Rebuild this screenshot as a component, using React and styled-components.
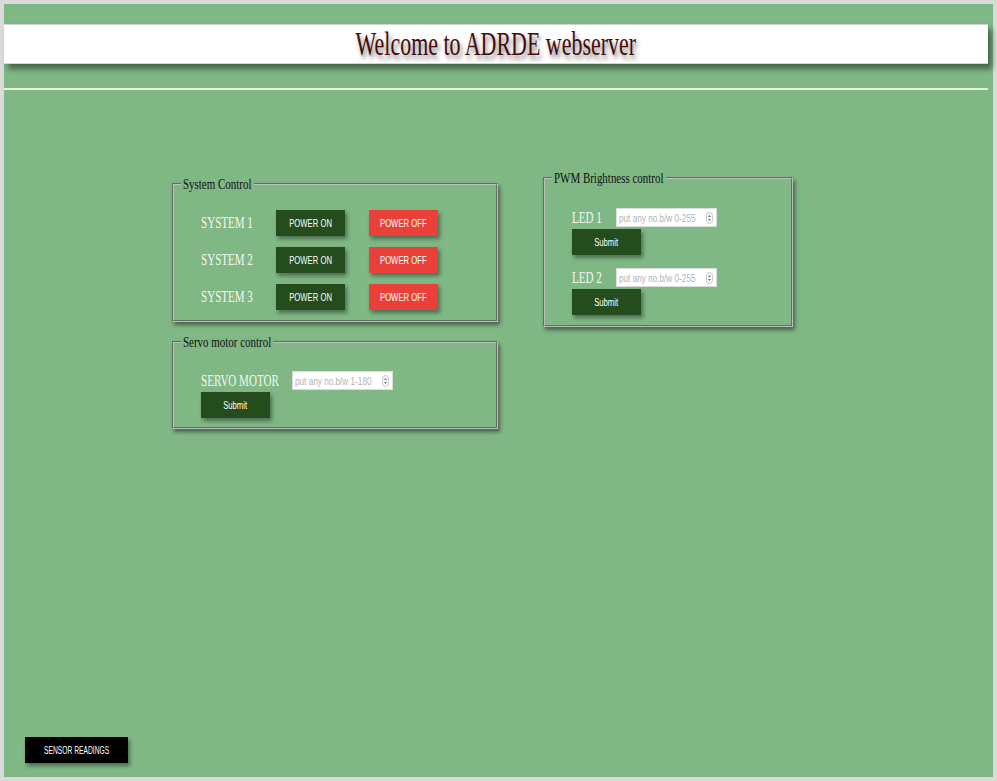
import React from 'react';
import styled, { createGlobalStyle } from 'styled-components';

const Global = createGlobalStyle`
  html, body { margin: 0; padding: 0; }
  body {
    background: #dadada;
    font-family: "Liberation Serif", "Times New Roman", serif;
  }
`;

const Frame = styled.div`
  box-sizing: border-box;
  height: 781px;
  padding: 4px 4px 4px 4px;
`;

const Page = styled.main`
  box-sizing: border-box;
  height: 100%;
  background: #7fb785;
  display: flex;
  flex-direction: column;
  padding-top: 20px;
`;

const Header = styled.header`
  box-sizing: border-box;
  height: 40px;
  margin-right: 5px;
  background: #fff;
  border-top: 1px solid #cfd6cf;
  border-bottom: 1px solid #d4d4d4;
  box-shadow: 4px 5px 6px rgba(0, 0, 0, 0.45);
  display: flex;
  align-items: center;
  justify-content: center;
`;

const Title = styled.h1`
  margin: 0;
  font-family: "Liberation Serif", serif;
  font-weight: normal;
  font-size: 33px;
  line-height: 38px;
  color: #4a0a0a;
  white-space: nowrap;
  text-shadow: 3px 4px 5px rgba(0, 0, 0, 0.5);
  transform: scaleX(0.665);
`;

const Rule = styled.hr`
  margin: 24px 5px 0 0;
  border: none;
  height: 2px;
  background: #eef2dc;
`;

const Content = styled.div`
  display: flex;
  align-items: flex-start;
  gap: 45px;
  margin-top: 80px;
  padding-left: 168px;
`;

const Column = styled.div`
  display: flex;
  flex-direction: column;
  gap: 12px;
  margin-top: ${(p) => p.$offset || 0}px;
`;

const Box = styled.fieldset`
  box-sizing: border-box;
  width: ${(p) => p.$w}px;
  margin: 0;
  padding: ${(p) => p.$pad};
  border: 2px groove #bdbdbd;
  box-shadow: 2px 3px 4px rgba(0, 0, 0, 0.45);
  display: flex;
  flex-direction: column;
`;

const Legend = styled.legend`
  width: ${(p) => p.$w}px;
  margin-left: -20px;
  padding: 0 2px;
  font-family: "Liberation Serif", serif;
  font-size: 15px;
  line-height: 16px;
  color: #111;
  white-space: nowrap;
  box-sizing: content-box;
`;

const Narrow = styled.span`
  display: inline-block;
  white-space: nowrap;
  transform: scaleX(${(p) => p.$s});
  transform-origin: ${(p) => (p.$center ? 'center' : 'left')} center;
`;

const Rows = styled.div`
  display: flex;
  flex-direction: column;
  gap: 11px;
`;

const Row = styled.div`
  display: flex;
  align-items: center;
  height: ${(p) => p.$h}px;
`;

const Label = styled.span`
  width: ${(p) => p.$w}px;
  flex: none;
  font-family: "Liberation Serif", serif;
  font-size: 17px;
  line-height: 18px;
  color: #f6f6f0;
  white-space: nowrap;
`;

const Btn = styled.button`
  width: ${(p) => p.$w || 69}px;
  height: 26px;
  flex: none;
  border: none;
  border-radius: 0;
  padding: 0;
  margin: 0 0 0 ${(p) => p.$ml || 0}px;
  background: ${(p) => p.$bg};
  color: #fff;
  font-family: "Liberation Sans", Arial, sans-serif;
  font-size: ${(p) => p.$fs || 11}px;
  box-shadow: 2px 3px 4px rgba(0, 0, 0, 0.4);
  display: flex;
  align-items: center;
  justify-content: center;
  cursor: pointer;
`;

const Stack = styled.div`
  display: flex;
  flex-direction: column;
  gap: ${(p) => p.$gap}px;
  margin-top: ${(p) => p.$mt || 0}px;
`;

const InputBox = styled.label`
  box-sizing: border-box;
  width: 101px;
  height: 19px;
  flex: none;
  background: #fff;
  border: 1px solid #dcdcdc;
  display: flex;
  align-items: center;
  padding: 0 3px 0 2px;
  overflow: hidden;
`;

const NumInput = styled.input`
  flex: none;
  width: 110px;
  margin-right: -24px;
  transform: scaleX(0.78);
  transform-origin: left center;
  border: none;
  outline: none;
  padding: 0;
  background: transparent;
  font-family: "Liberation Sans", Arial, sans-serif;
  font-size: 10.5px;
  color: #333;
  &::placeholder {
    color: #b3b3b3;
  }
`;

const Spinner = () => (
  <svg width="7" height="12" viewBox="0 0 7 12" aria-hidden="true" style={{ marginLeft: 'auto' }}>
    <rect x="0.5" y="0.5" width="6" height="11" rx="3" fill="#f7f7f7" stroke="#c9c9c9" />
    <path d="M2 5 L3.5 3 L5 5 Z" fill="#777" />
    <path d="M2 7 L3.5 9 L5 7 Z" fill="#777" />
  </svg>
);

const Field = ({ placeholder }) => (
  <InputBox>
    <NumInput type="text" placeholder={placeholder} />
    <Spinner />
  </InputBox>
);

const Footer = styled.div`
  margin-top: auto;
  padding: 0 0 14px 21px;
`;

const DARK = '#244c1c';
const RED = '#e9413a';

function BtnText({ children }) {
  return (
    <Narrow $s={0.7} $center>
      {children}
    </Narrow>
  );
}

export default function App() {
  const systems = ['SYSTEM 1', 'SYSTEM 2', 'SYSTEM 3'];
  return (
    <>
      <Global />
      <Frame>
        <Page>
          <Header>
            <Title>Welcome to ADRDE webserver</Title>
          </Header>
          <Rule />
          <Content>
            <Column $offset={6}>
              <Box $w={326} $pad="18px 0 10px 27px">
                <Legend $w={69}>
                  <Narrow $s={0.73}>System Control</Narrow>
                </Legend>
                <Rows>
                  {systems.map((s) => (
                    <Row key={s} $h={26}>
                      <Label $w={75}>
                        <Narrow $s={0.65}>{s}</Narrow>
                      </Label>
                      <Btn $bg={DARK}>
                        <BtnText>POWER ON</BtnText>
                      </Btn>
                      <Btn $bg={RED} $ml={24}>
                        <BtnText>POWER OFF</BtnText>
                      </Btn>
                    </Row>
                  ))}
                </Rows>
              </Box>
              <Box $w={326} $pad="21px 0 9px 27px">
                <Legend $w={88}>
                  <Narrow $s={0.73}>Servo motor control</Narrow>
                </Legend>
                <Stack $gap={2}>
                  <Row $h={19}>
                    <Label $w={91}>
                      <Narrow $s={0.65}>SERVO MOTOR</Narrow>
                    </Label>
                    <Field placeholder="put any no.b/w 1-180" />
                  </Row>
                  <Btn $bg={DARK}>
                    <BtnText>Submit</BtnText>
                  </Btn>
                </Stack>
              </Box>
            </Column>
            <Column>
              <Box $w={250} $pad="22px 0 10px 27px">
                <Legend $w={110}>
                  <Narrow $s={0.73}>PWM Brightness control</Narrow>
                </Legend>
                <Stack $gap={2}>
                  <Row $h={19}>
                    <Label $w={44}>
                      <Narrow $s={0.65}>LED 1</Narrow>
                    </Label>
                    <Field placeholder="put any no.b/w 0-255" />
                  </Row>
                  <Btn $bg={DARK}>
                    <BtnText>Submit</BtnText>
                  </Btn>
                </Stack>
                <Stack $gap={2} $mt={13}>
                  <Row $h={19}>
                    <Label $w={44}>
                      <Narrow $s={0.65}>LED 2</Narrow>
                    </Label>
                    <Field placeholder="put any no.b/w 0-255" />
                  </Row>
                  <Btn $bg={DARK}>
                    <BtnText>Submit</BtnText>
                  </Btn>
                </Stack>
              </Box>
            </Column>
          </Content>
          <Footer>
            <Btn $bg="#000" $w={103} $fs={10}>
              <Narrow $s={0.67} $center>SENSOR READINGS</Narrow>
            </Btn>
          </Footer>
        </Page>
      </Frame>
    </>
  );
}
